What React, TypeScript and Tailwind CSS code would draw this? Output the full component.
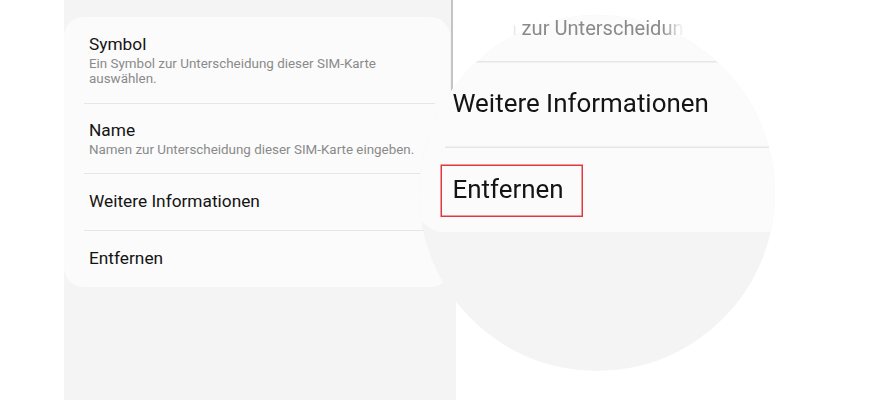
import React from "react";

function Divider() {
  return <div className="ml-[20px] mr-[15px] h-px bg-[#e6e6e6]" />;
}

function Card({ magnified = false }: { magnified?: boolean }) {
  return (
    <div className="w-[386px] rounded-[20px] bg-[#fbfbfb] font-['Roboto',sans-serif]">
      <div className="h-[86px] pl-[25px] pr-[20px] pt-[17px]">
        <div className="text-[17.3px] leading-[20px] text-[#141414]">Symbol</div>
        <div className="mt-[3px] whitespace-nowrap text-[13.4px] leading-[14.5px] text-[#8a8a8a]">
          Ein Symbol zur Unterscheidung dieser SIM-Karte
          <br />
          auswählen.
        </div>
      </div>
      <Divider />
      <div className="h-[69px] pl-[25px] pr-[20px] pt-[16px]">
        <div className="text-[17.3px] leading-[20px] text-[#141414]">Name</div>
        <div
          className={
            magnified
              ? "invisible mt-[3px] whitespace-nowrap text-[13.4px] leading-[14.5px] text-[#8a8a8a]"
              : "mt-[3px] whitespace-nowrap text-[13.4px] leading-[14.5px] text-[#8a8a8a]"
          }
        >
          Namen zur Unterscheidung dieser SIM-Karte eingeben.
        </div>
      </div>
      <Divider />
      <div className="flex h-[56px] items-center pl-[25px] text-[17.3px] text-[#141414]">
        Weitere Informationen
      </div>
      <Divider />
      <div className="relative flex h-[56px] items-center pl-[25px] text-[17.3px] text-[#141414]">
        Entfernen
        {magnified && (
          <div className="absolute left-[17px] top-[11.3px] h-[34.7px] w-[94.7px] border border-[#e2383d]" />
        )}
      </div>
    </div>
  );
}

export default function App() {
  return (
    <div className="relative h-[400px] w-[879px] overflow-hidden bg-white font-['Roboto',sans-serif]">
      <div className="flex h-full pl-[64px]">
        <div className="h-full w-[392px] bg-[#f4f4f4] pt-[17px]">
          <Card />
        </div>
      </div>

      {/* edge line of the screenshot */}
      <div className="absolute left-[451px] top-0 h-[100px] w-[2px] bg-[#c4c4c4]" />
      <div className="absolute left-[453px] top-0 h-[100px] w-[3px] bg-white" />

      {/* magnifier lens */}
      <div className="absolute left-[419px] top-[15px] h-[356px] w-[356px] overflow-hidden rounded-full bg-[#f4f4f4]">
        <div className="absolute left-[-4.5px] top-[-188px] origin-top-left scale-150">
          <Card magnified />
        </div>
      </div>

      {/* magnified subtitle, feathered past the lens edge */}
      <div className="absolute left-[452px] top-[17.5px] w-[250px] overflow-hidden whitespace-nowrap text-[20.1px] leading-[21.75px] text-[#8a8a8a] [mask-image:linear-gradient(to_right,transparent_0%,transparent_24.5%,black_27%,black_84%,transparent_93%)]">
        Namen zur Unterscheidung dieser
      </div>
    </div>
  );
}
